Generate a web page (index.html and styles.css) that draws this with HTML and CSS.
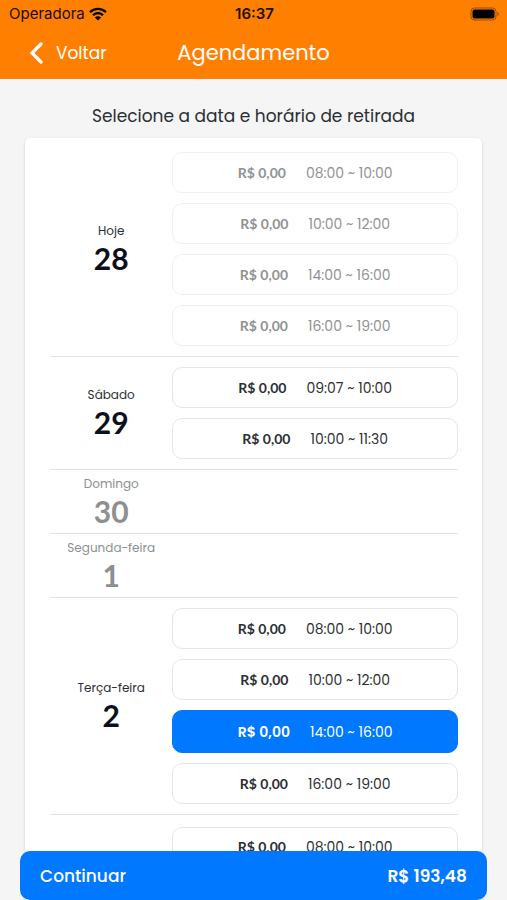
FILE: index.html
```html
<!DOCTYPE html>
<html lang="pt-BR">
<head>
<meta charset="utf-8">
<meta name="viewport" content="width=device-width, initial-scale=1">
<title>Agendamento</title>
<link rel="stylesheet" href="styles.css">
</head>
<body>
<div class="app">
  <header class="header">
    <div class="status">
      <span class="carrier">Operadora
        <svg class="wifi" viewBox="0 0 18 14" aria-hidden="true"><path d="M1 5.200a11.300 11.300 0 0 1 16 0M4 8.300a7 7 0 0 1 10 0" fill="none" stroke="currentColor" stroke-width="2.300"/><path d="M9 13.600 5.900 10.500a4.400 4.400 0 0 1 6.200 0z" fill="currentColor"/></svg>
      </span>
      <span class="clock">16:37</span>
      <svg class="battery" viewBox="0 0 30 14" aria-hidden="true"><rect x="1" y="1" width="25" height="12" rx="3.5" fill="none" stroke="#000" stroke-opacity=".4"/><rect x="2.5" y="2.5" width="22" height="9" rx="2" fill="#000"/><path d="M27.5 5v4c1.800-.6 1.800-3.400 0-4z" fill="#000" fill-opacity=".45"/></svg>
    </div>
    <div class="nav">
      <a class="back" href="#">
        <svg class="chevron" viewBox="0 0 14 22" aria-hidden="true"><path d="M12 2 3 11 12 20" fill="none" stroke="currentColor" stroke-width="3.200" stroke-linecap="round" stroke-linejoin="miter"/></svg>
        Voltar
      </a>
      <h1 class="title">Agendamento</h1>
    </div>
  </header>
  <main class="main">
    <h2 class="prompt">Selecione a data e horário de retirada</h2>
    <div class="card">
      <section class="day">
        <div class="date"><span class="weekday">Hoje</span><span class="number">28</span></div>
        <div class="slots">
          <button class="slot" disabled><b class="price">R$ 0,00</b><span>08:00 ~ 10:00</span></button>
          <button class="slot" disabled><b class="price">R$ 0,00</b><span>10:00 ~ 12:00</span></button>
          <button class="slot" disabled><b class="price">R$ 0,00</b><span>14:00 ~ 16:00</span></button>
          <button class="slot" disabled><b class="price">R$ 0,00</b><span>16:00 ~ 19:00</span></button>
        </div>
      </section>
      <section class="day">
        <div class="date"><span class="weekday">Sábado</span><span class="number">29</span></div>
        <div class="slots">
          <button class="slot"><b class="price">R$ 0,00</b><span>09:07 ~ 10:00</span></button>
          <button class="slot"><b class="price">R$ 0,00</b><span>10:00 ~ 11:30</span></button>
        </div>
      </section>
      <section class="day closed">
        <div class="date"><span class="weekday">Domingo</span><span class="number">30</span></div>
      </section>
      <section class="day closed">
        <div class="date"><span class="weekday">Segunda-feira</span><span class="number">1</span></div>
      </section>
      <section class="day">
        <div class="date"><span class="weekday">Terça-feira</span><span class="number">2</span></div>
        <div class="slots">
          <button class="slot"><b class="price">R$ 0,00</b><span>08:00 ~ 10:00</span></button>
          <button class="slot"><b class="price">R$ 0,00</b><span>10:00 ~ 12:00</span></button>
          <button class="slot selected" aria-pressed="true"><b class="price">R$ 0,00</b><span>14:00 ~ 16:00</span></button>
          <button class="slot"><b class="price">R$ 0,00</b><span>16:00 ~ 19:00</span></button>
        </div>
      </section>
      <section class="day">
        <div class="date"></div>
        <div class="slots">
          <button class="slot"><b class="price">R$ 0,00</b><span>08:00 ~ 10:00</span></button>
        </div>
      </section>
    </div>
  </main>
  <button class="continue"><span>Continuar</span><span class="total">R$ 193,48</span></button>
</div>
</body>
</html>
```

FILE: styles.css
```css
* { box-sizing: border-box; }

body {
  margin: 0;
  background: #f5f5f5;
  color: #2b2f33;
  font-family: Poppins, Inter, sans-serif;
}

.app {
  display: flex;
  flex-direction: column;
  height: 100vh;
}

.header {
  flex: none;
  background: #ff8000;
  color: #fff;
}

.status {
  display: grid;
  grid-template-columns: 1fr auto 1fr;
  align-items: center;
  height: 27px;
  padding: 0 7px 0 9px;
  color: #1c0e00;
  font: 15px/20px Inter, sans-serif;
}

.carrier { display: flex; align-items: center; gap: 4px; }
.wifi { width: 18px; height: 14px; color: #000; }
.clock { font-weight: 600; }
.battery { width: 30px; height: 14px; justify-self: end; }

.nav {
  display: grid;
  grid-template-columns: 1fr auto 1fr;
  align-items: center;
  height: 52px;
  padding: 0 29px;
}

.back {
  display: flex;
  align-items: center;
  gap: 13px;
  color: #fff;
  font-size: 17px;
  text-decoration: none;
}

.chevron { width: 14px; height: 22px; }
.title { margin: 0; font-size: 21px; line-height: 30px; font-weight: 400; }

.main {
  flex: 1;
  min-height: 0;
  overflow-y: auto;
  scrollbar-width: none;
  padding: 24px 25px 0;
}

.prompt {
  margin: 0 0 9px;
  font-size: 17px;
  line-height: 26px;
  font-weight: 400;
  text-align: center;
}

.card {
  padding: 4px 24px 48px 25px;
  background: #fff;
  border-radius: 5px;
  box-shadow: 0 1px 3px rgba(0, 0, 0, 0.16);
}

.day {
  display: grid;
  grid-template-columns: 3fr 7fr;
  align-items: center;
  min-height: 64px;
  border-bottom: 1px solid #e2e2e2;
}

.day:last-child { border-bottom: 0; }

.date {
  display: flex;
  flex-direction: column;
  align-items: center;
  padding-bottom: 2px;
}

.weekday { font-size: 12px; line-height: 20px; }
.number { color: #0d101c; font: 700 30px/34px Lato, sans-serif; }

.closed .weekday,
.closed .number { color: #8d8f91; }

.slots {
  display: flex;
  flex-direction: column;
  gap: 10px;
  padding: 10px 0;
}

.slot {
  display: flex;
  align-items: center;
  justify-content: center;
  gap: 20px;
  width: 100%;
  height: 41px;
  padding: 0;
  border: 1px solid #e4e5e7;
  border-radius: 10px;
  background: #fff;
  color: #2b2f33;
  font: 14px/20px Poppins, Inter, sans-serif;
}

.price { font: 700 14px/20px Lato, sans-serif; }
.slot:disabled { border-color: #f1f1f2; color: #909294; }

.slot.selected {
  height: 43px;
  border-color: #0078ff;
  background: #0078ff;
  color: #fff;
}

.selected .price { font: 600 14px/20px Poppins, Inter, sans-serif; }

.continue {
  position: fixed;
  right: 20px;
  bottom: 0;
  left: 20px;
  display: flex;
  align-items: center;
  justify-content: space-between;
  height: 49px;
  padding: 0 20px;
  border: 0;
  border-radius: 10px;
  background: #0078ff;
  color: #fff;
  font: 500 17px/24px Poppins, Inter, sans-serif;
}

.total { font-weight: 600; }
```
